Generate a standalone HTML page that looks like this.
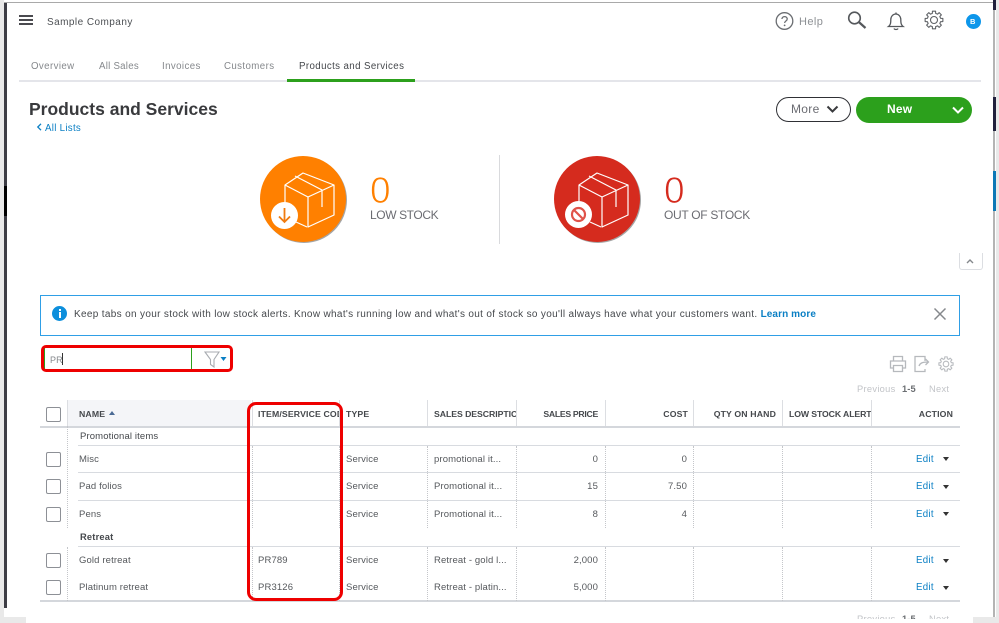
<!DOCTYPE html>
<html><head><meta charset="utf-8"><style>
html,body{margin:0;padding:0;background:#fff}
#p{position:relative;width:999px;height:623px;overflow:hidden;background:#fff;font-family:"Liberation Sans",sans-serif;color:#55585c}
#p div,#p span,#p svg{position:absolute}
.t{white-space:nowrap;line-height:14px;font-size:9.5px;letter-spacing:.13px;transform:translateY(-6px)}
.r{transform:translate(-100%,-6px)}
.h{font-weight:bold;font-size:8.7px;color:#45484c;letter-spacing:.15px}
.tab{font-size:9.7px;color:#85888c;letter-spacing:.4px}
.cb{left:46px;width:13px;height:13px;border:1px solid #8d9096;border-radius:2px;background:#fff}
.e{color:#0a7fc4;font-size:9.7px;left:916px;letter-spacing:.3px}
.car{left:943px;width:0;height:0;border-left:3.5px solid transparent;border-right:3.5px solid transparent;border-top:4px solid #333}
.hl{background:#d8dbe0;height:1px}
.vd{width:0;border-left:1px dotted #c4c6ca}
.vs{width:1px;background:#dcdee2}
.zero{font-size:37px;line-height:36px;transform:translateY(-18px);-webkit-text-stroke:.8px #fff}
</style></head><body><div id="p">
<!-- screen edges -->
<div style="left:0;top:0;width:4px;height:617px;background:#e9e9e9"></div>
<div style="left:4px;top:3px;width:3px;height:605px;background:#3d3d45"></div>
<div style="left:4px;top:186px;width:3px;height:30px;background:#000"></div>
<div style="left:4px;top:2px;width:990px;height:1px;background:#a9a9a9"></div>
<div style="left:993px;top:0;width:2px;height:623px;background:#b4b4b4"></div>
<div style="left:993px;top:0;width:3px;height:10px;background:#20203c"></div>
<div style="left:993px;top:97px;width:3px;height:34px;background:#20203c"></div>
<div style="left:993px;top:171px;width:3px;height:40px;background:#0b78b6"></div>
<div style="left:996px;top:0;width:3px;height:623px;background:#e9e9e9"></div>

<!-- top bar -->
<div style="left:19px;top:15px;width:14px;height:2px;background:#4a4a4f"></div>
<div style="left:19px;top:19px;width:14px;height:2px;background:#4a4a4f"></div>
<div style="left:19px;top:23px;width:14px;height:2px;background:#4a4a4f"></div>
<span class="t" style="left:47px;top:22px;font-size:10px;color:#4d5054;letter-spacing:.45px">Sample Company</span>
<svg style="left:775px;top:11px" width="20" height="20" viewBox="0 0 20 20" fill="none"><circle cx="9.5" cy="10" r="8.3" stroke="#6b6e72" stroke-width="1.3"/><path d="M7 8c0-3.200 5.200-3.200 5.200 0 0 2-2.600 2-2.600 4" stroke="#6b6e72" stroke-width="1.3"/><circle cx="9.600" cy="14.400" r=".9" fill="#6b6e72"/></svg>
<span class="t" style="left:799px;top:21px;font-size:11px;color:#8d9094;letter-spacing:.4px">Help</span>
<svg style="left:847px;top:11px" width="20" height="18" viewBox="0 0 20 18" fill="none"><circle cx="7.500" cy="7" r="5.800" stroke="#55585c" stroke-width="1.600"/><path d="M11.800 11l6.700 6" stroke="#55585c" stroke-width="2.200"/></svg>
<svg style="left:886px;top:11px" width="20" height="20" viewBox="0 0 20 20" fill="none" stroke="#55585c" stroke-width="1.300"><path d="M2.500 15.500c2-1.500 2.300-3.200 2.300-7 0-3 2.200-5.500 5-5.500s5 2.500 5 5.500c0 3.800.3 5.500 2.300 7z"/><path d="M8 17.500c.6 1.300 3.400 1.300 4 0M10 3V1.500"/></svg>
<svg style="left:924px;top:10px" width="20" height="20" viewBox="0 0 20 20" fill="none" stroke="#5f6266" stroke-width="1.100" stroke-linejoin="round"><g transform="translate(10 10)"><polygon points="6.60,-1.65 8.860,-1.560 8.860,1.560 6.60,1.65 5.830,3.50 7.370,5.160 5.160,7.370 3.50,5.830 1.65,6.60 1.56,8.860 -1.56,8.860 -1.65,6.60 -3.50,5.830 -5.160,7.370 -7.370,5.160 -5.830,3.50 -6.60,1.65 -8.860,1.56 -8.860,-1.56 -6.60,-1.65 -5.830,-3.50 -7.370,-5.160 -5.160,-7.370 -3.50,-5.830 -1.65,-6.60 -1.56,-8.860 1.56,-8.860 1.65,-6.60 3.50,-5.830 5.160,-7.370 7.370,-5.160 5.830,-3.50"/><circle r="3.500"/></g></svg>
<div style="left:966px;top:14px;width:15px;height:15px;border-radius:50%;background:#0d96ea"></div>
<span class="t" style="left:970px;top:21px;font-size:7.500px;font-weight:bold;color:#fff">B</span>

<!-- tabs -->
<span class="t tab" style="left:31px;top:66px">Overview</span>
<span class="t tab" style="left:99px;top:66px;letter-spacing:.25px">All Sales</span>
<span class="t tab" style="left:162px;top:66px">Invoices</span>
<span class="t tab" style="left:224px;top:66px">Customers</span>
<span class="t tab" style="left:299px;top:66px;color:#44474b">Products and Services</span>
<div style="left:19px;top:80px;width:962px;height:2px;background:#e4e5ea"></div>
<div style="left:287px;top:79px;width:128px;height:3px;background:#2ca01c"></div>

<!-- title -->
<span class="t" style="left:29px;top:109px;font-size:17.500px;font-weight:bold;color:#393a3d;letter-spacing:0;line-height:20px;transform:translateY(-10px)">Products and Services</span>
<svg style="left:36px;top:123px" width="7" height="8" viewBox="0 0 7 8" fill="none"><path d="M5 .8L1.800 4 5 7.200" stroke="#0a7fc4" stroke-width="1.300"/></svg>
<span class="t" style="left:45px;top:128px;color:#0a7fc4;font-size:9.700px;letter-spacing:.3px">All Lists</span>

<!-- buttons -->
<div style="left:776px;top:97px;width:73px;height:23px;border:1.500px solid #2f3035;border-radius:13px;background:#fff"></div>
<span class="t" style="left:791px;top:108px;font-size:12px;color:#6b6c72;letter-spacing:.3px">More</span>
<svg style="left:826px;top:105px" width="13" height="9" viewBox="0 0 13 9" fill="none"><path d="M1.500 1.500L6.500 6.500 11.500 1.500" stroke="#393a3d" stroke-width="2"/></svg>
<div style="left:856px;top:97px;width:116px;height:26px;border-radius:13px;background:#2ca01c"></div>
<span class="t" style="left:887px;top:108px;font-size:12px;font-weight:bold;color:#fff;letter-spacing:.2px">New</span>
<svg style="left:951px;top:106px" width="14" height="9" viewBox="0 0 14 9" fill="none"><path d="M2 1.500L7 6.500 12 1.500" stroke="#fff" stroke-width="2"/></svg>

<!-- low stock -->
<div style="left:261px;top:157px;width:86px;height:86px;border-radius:50%;background:#a5a5a5"></div>
<div style="left:260px;top:156px;width:86px;height:86px;border-radius:50%;background:#ff8000"></div>
<svg style="left:260px;top:156px" width="86" height="86" viewBox="0 0 86 86" fill="none" stroke="#fff" stroke-width="1.200" stroke-linejoin="round"><path d="M25 29L43 17 74 29 48 41zM25 29v18M48 41v30L74 59V29M36 66l11 5M35 20l27 14v17"/></svg>
<div style="left:271px;top:202px;width:27px;height:27px;border-radius:50%;background:#fff"></div>
<svg style="left:271px;top:202px" width="27" height="27" viewBox="0 0 27 27" fill="none" stroke="#f07c10" stroke-width="1.800"><path d="M13.500 6v14M8 14.500l5.500 5.500 5.500-5.500"/></svg>
<span class="t zero" style="left:370px;top:191px;color:#ff8000">0</span>
<span class="t" style="left:370px;top:214px;font-size:12px;color:#6b6c72;letter-spacing:-.4px">LOW STOCK</span>
<div style="left:499px;top:155px;width:1px;height:89px;background:#d9dadd"></div>

<!-- out of stock -->
<div style="left:555px;top:157px;width:86px;height:86px;border-radius:50%;background:#a5a5a5"></div>
<div style="left:554px;top:156px;width:86px;height:86px;border-radius:50%;background:#d52b1e"></div>
<svg style="left:554px;top:156px" width="86" height="86" viewBox="0 0 86 86" fill="none" stroke="#fff" stroke-width="1.200" stroke-linejoin="round"><path d="M25 29L43 17 74 29 48 41zM25 29v18M48 41v30L74 59V29M36 66l11 5M35 20l27 14v17"/></svg>
<div style="left:565px;top:201px;width:27px;height:27px;border-radius:50%;background:#fff"></div>
<svg style="left:565px;top:201px" width="27" height="27" viewBox="0 0 27 27" fill="none" stroke="#e0534a" stroke-width="2.200"><circle cx="13.500" cy="13.500" r="6.500"/><path d="M9 9l9 9"/></svg>
<span class="t zero" style="left:664px;top:191px;color:#d52b1e">0</span>
<span class="t" style="left:664px;top:214px;font-size:12px;color:#6b6c72;letter-spacing:-.3px">OUT OF STOCK</span>

<!-- collapse -->
<div style="left:959px;top:253px;width:22px;height:16px;border:1px solid #dcdee2;border-top:0;border-radius:0 0 3px 3px"></div>
<svg style="left:965px;top:258px" width="10" height="7" viewBox="0 0 10 7" fill="none"><path d="M2 5l3-3 3 3" stroke="#85888c" stroke-width="1.400"/></svg>

<!-- alert -->
<div style="left:40px;top:295px;width:918px;height:39px;border:1px solid #2f9fe6"></div>
<div style="left:52px;top:306px;width:15px;height:15px;border-radius:50%;background:#0d8fdc"></div>
<div style="left:58.500px;top:309px;width:2px;height:2px;background:#fff"></div>
<div style="left:58.500px;top:312px;width:2px;height:6px;background:#fff"></div>
<span class="t" style="left:74px;top:314px;font-size:10px;color:#45484c;letter-spacing:.33px">Keep tabs on your stock with low stock alerts. Know what's running low and what's out of stock so you'll always have what your customers want. <b style="color:#0a7fc4;font-weight:bold;letter-spacing:.1px">Learn more</b></span>
<svg style="left:933px;top:307px" width="14" height="14" viewBox="0 0 14 14" fill="none"><path d="M1.500 1.500l11 11M12.500 1.500l-11 11" stroke="#85888c" stroke-width="1.500"/></svg>

<!-- search -->
<div style="left:44px;top:348px;width:146px;height:21px;border-left:1px solid #2ca01c;border-right:1px solid #2ca01c"></div>
<span class="t" style="left:50px;top:358.500px;font-size:9px;color:#85888c">PR</span>
<div style="left:62px;top:353px;width:1px;height:12px;background:#333"></div>
<svg style="left:204px;top:351px" width="26" height="17" viewBox="0 0 26 17" fill="none"><path d="M1 1h14L10 8.500V16L6.500 13.500V8.500z" stroke="#a8abb0" stroke-width="1.100"/><path d="M16.500 6h6l-3 4z" fill="#0a7fc4"/></svg>
<div style="left:41px;top:345px;width:186px;height:21px;border:3px solid #ee0000;border-radius:5px"></div>

<!-- icons -->
<svg style="left:889px;top:355px" width="18" height="18" viewBox="0 0 18 18" fill="none" stroke="#b6b9bd" stroke-width="1.300"><path d="M4.500 6V1.500h9V6M4.500 13H1.500V6h15v7h-3M4.500 10.500h9v6h-9z"/></svg>
<svg style="left:913px;top:355px" width="18" height="18" viewBox="0 0 18 18" fill="none" stroke="#b6b9bd" stroke-width="1.300"><path d="M12 6V1.500H2v15h10v-2.500M6 11c1-3 3.500-4 9-4M12.500 4l3 3-3 3"/></svg>
<svg style="left:938px;top:356px" width="16" height="16" viewBox="0 0 20 20" fill="none" stroke="#b6b9bd" stroke-width="1.300" stroke-linejoin="round"><g transform="translate(10 10)"><polygon points="6.60,-1.65 8.860,-1.560 8.860,1.560 6.60,1.65 5.830,3.50 7.370,5.160 5.160,7.370 3.50,5.830 1.65,6.60 1.56,8.860 -1.56,8.860 -1.65,6.60 -3.50,5.830 -5.160,7.370 -7.370,5.160 -5.830,3.50 -6.60,1.65 -8.860,1.56 -8.860,-1.56 -6.60,-1.65 -5.830,-3.50 -7.370,-5.160 -5.160,-7.370 -3.50,-5.830 -1.65,-6.60 -1.56,-8.860 1.56,-8.860 1.65,-6.60 3.50,-5.830 5.160,-7.370 7.370,-5.160 5.830,-3.50"/><circle r="3.500"/></g></svg>
<span class="t" style="left:857px;top:388px;color:#c2c4c8;font-size:9.300px;letter-spacing:.3px">Previous</span>
<span class="t" style="left:902px;top:388px;color:#6b6e72;font-size:9.300px;font-weight:bold">1-5</span>
<span class="t" style="left:929px;top:388px;color:#c2c4c8;font-size:9.300px;letter-spacing:.3px">Next</span>

<!-- table header -->
<div style="left:67px;top:400px;width:184px;height:26px;background:#f4f5f8"></div>
<div class="hl" style="left:40px;top:425.500px;width:920px;height:2px;background:#d4d7dc"></div>
<div class="vs" style="left:67px;top:400px;height:26px"></div>
<div class="vs" style="left:252px;top:400px;height:26px"></div>
<div class="vs" style="left:339px;top:400px;height:26px"></div>
<div class="vs" style="left:427px;top:400px;height:26px"></div>
<div class="vs" style="left:516px;top:400px;height:26px"></div>
<div class="vs" style="left:605px;top:400px;height:26px"></div>
<div class="vs" style="left:693px;top:400px;height:26px"></div>
<div class="vs" style="left:782px;top:400px;height:26px"></div>
<div class="vs" style="left:871px;top:400px;height:26px"></div>
<div class="cb" style="top:407px"></div>
<span class="t h" style="left:79px;top:413px">NAME</span>
<div style="left:109px;top:411px;width:0;height:0;border-left:3px solid transparent;border-right:3px solid transparent;border-bottom:4px solid #4a6a94"></div>
<span class="t h" style="left:258px;top:413px;width:81px;overflow:hidden">ITEM/SERVICE CODE</span>
<span class="t h" style="left:346px;top:413px">TYPE</span>
<span class="t h" style="left:434px;top:413px;width:82px;overflow:hidden;letter-spacing:-.05px">SALES DESCRIPTION</span>
<span class="t h r" style="left:598px;top:413px;letter-spacing:-.3px">SALES PRICE</span>
<span class="t h r" style="left:688px;top:413px">COST</span>
<span class="t h r" style="left:776px;top:413px">QTY ON HAND</span>
<span class="t h" style="left:789px;top:413px;width:82px;overflow:hidden;letter-spacing:-.1px">LOW STOCK ALERT</span>
<span class="t h r" style="left:953px;top:413px">ACTION</span>

<!-- group 1 -->
<span class="t" style="left:80px;top:436px;color:#45484c;font-size:9.500px">Promotional items</span>
<div class="hl" style="left:78px;top:445px;width:882px"></div>
<div class="hl" style="left:78px;top:472px;width:882px"></div>
<div class="hl" style="left:78px;top:500px;width:882px"></div>
<div class="hl" style="left:78px;top:546px;width:882px"></div>
<div class="hl" style="left:40px;top:600px;width:920px;height:2px;background:#d4d7dc"></div>

<div class="vd" style="left:67px;top:426px;height:102px"></div>
<div class="vd" style="left:252px;top:446px;height:82px"></div>
<div class="vd" style="left:339px;top:446px;height:82px"></div>
<div class="vd" style="left:427px;top:446px;height:82px"></div>
<div class="vd" style="left:516px;top:446px;height:82px"></div>
<div class="vd" style="left:605px;top:446px;height:82px"></div>
<div class="vd" style="left:693px;top:446px;height:82px"></div>
<div class="vd" style="left:782px;top:446px;height:82px"></div>
<div class="vd" style="left:871px;top:446px;height:82px"></div>
<div class="vd" style="left:67px;top:547px;height:54px"></div>
<div class="vd" style="left:252px;top:547px;height:54px"></div>
<div class="vd" style="left:339px;top:547px;height:54px"></div>
<div class="vd" style="left:427px;top:547px;height:54px"></div>
<div class="vd" style="left:516px;top:547px;height:54px"></div>
<div class="vd" style="left:605px;top:547px;height:54px"></div>
<div class="vd" style="left:693px;top:547px;height:54px"></div>
<div class="vd" style="left:782px;top:547px;height:54px"></div>
<div class="vd" style="left:871px;top:547px;height:54px"></div>

<div class="cb" style="top:452px"></div>
<span class="t" style="left:79px;top:458.500px">Misc</span>
<span class="t" style="left:346px;top:458.500px">Service</span>
<span class="t" style="left:434px;top:458.500px">promotional it...</span>
<span class="t r" style="left:598px;top:458.500px">0</span>
<span class="t r" style="left:687px;top:458.500px">0</span>
<span class="t e" style="top:458.500px">Edit</span><div class="car" style="top:457px"></div>

<div class="cb" style="top:479px"></div>
<span class="t" style="left:79px;top:486px">Pad folios</span>
<span class="t" style="left:346px;top:486px">Service</span>
<span class="t" style="left:434px;top:486px">Promotional it...</span>
<span class="t r" style="left:598px;top:486px">15</span>
<span class="t r" style="left:687px;top:486px">7.50</span>
<span class="t e" style="top:486px">Edit</span><div class="car" style="top:485px"></div>

<div class="cb" style="top:507px"></div>
<span class="t" style="left:79px;top:513.500px">Pens</span>
<span class="t" style="left:346px;top:513.500px">Service</span>
<span class="t" style="left:434px;top:513.500px">Promotional it...</span>
<span class="t r" style="left:598px;top:513.500px">8</span>
<span class="t r" style="left:687px;top:513.500px">4</span>
<span class="t e" style="top:513.500px">Edit</span><div class="car" style="top:512px"></div>

<span class="t" style="left:80px;top:536px;color:#45484c;font-weight:bold;font-size:9.300px;letter-spacing:.2px">Retreat</span>

<div class="cb" style="top:553px"></div>
<span class="t" style="left:79px;top:560px">Gold retreat</span>
<span class="t" style="left:258px;top:560px">PR789</span>
<span class="t" style="left:346px;top:560px">Service</span>
<span class="t" style="left:434px;top:560px">Retreat - gold l...</span>
<span class="t r" style="left:598px;top:560px">2,000</span>
<span class="t e" style="top:560px">Edit</span><div class="car" style="top:559px"></div>

<div class="cb" style="top:580px"></div>
<span class="t" style="left:79px;top:587px">Platinum retreat</span>
<span class="t" style="left:258px;top:587px">PR3126</span>
<span class="t" style="left:346px;top:587px">Service</span>
<span class="t" style="left:434px;top:587px">Retreat - platin...</span>
<span class="t r" style="left:598px;top:587px">5,000</span>
<span class="t e" style="top:587px">Edit</span><div class="car" style="top:586px"></div>

<span class="t" style="left:857px;top:618px;color:#c2c4c8;font-size:9.300px;letter-spacing:.3px">Previous</span>
<span class="t" style="left:902px;top:618px;color:#6b6e72;font-size:9.300px;font-weight:bold">1-5</span>
<span class="t" style="left:929px;top:618px;color:#c2c4c8;font-size:9.300px;letter-spacing:.3px">Next</span>
<div style="left:26px;top:619px;width:947px;height:4px;background:#fff"></div>
<div style="left:0;top:617px;width:26px;height:6px;background:#e9e9e9"></div>
<div style="left:973px;top:617px;width:26px;height:6px;background:#e9e9e9"></div>

<!-- red highlight -->
<div style="left:247px;top:402px;width:90px;height:193px;border:3px solid #ee0000;border-radius:9px"></div>
</div></body></html>
